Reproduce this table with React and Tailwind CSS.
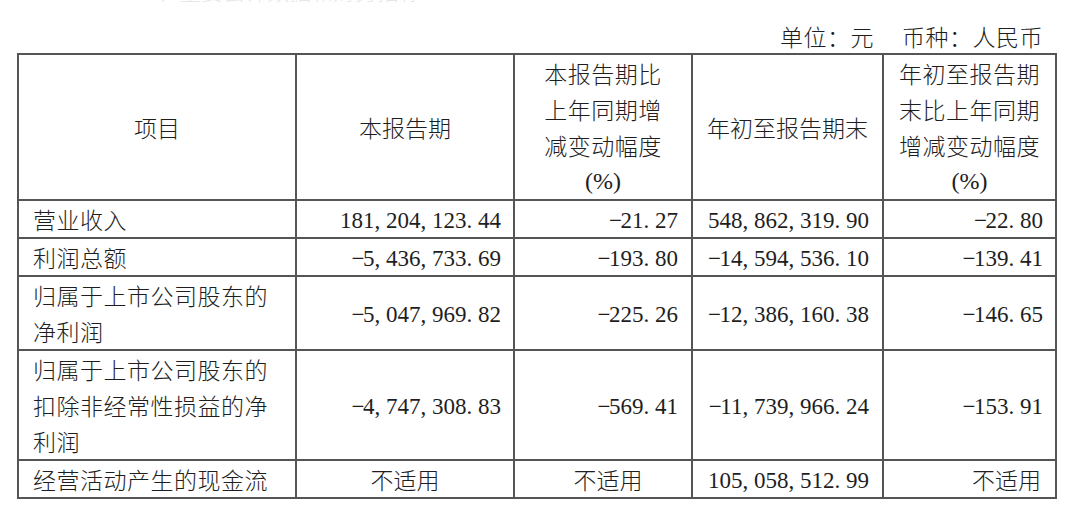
const rows = [
  { name: ["营业收入"], h: "h-[36px]", cur: "181,204,123.44", pct: "-21.27", ytd: "548,862,319.90", ytdPct: "-22.80" },
  { name: ["利润总额"], h: "h-[36px]", cur: "-5,436,733.69", pct: "-193.80", ytd: "-14,594,536.10", ytdPct: "-139.41" },
  { name: ["归属于上市公司股东的", "净利润"], h: "h-[71px]", cur: "-5,047,969.82", pct: "-225.26", ytd: "-12,386,160.38", ytdPct: "-146.65" },
  {
    name: ["归属于上市公司股东的", "扣除非经常性损益的净", "利润"],
    h: "h-[108px]",
    cur: "-4,747,308.83",
    pct: "-569.41",
    ytd: "-11,739,966.24",
    ytdPct: "-153.91",
  },
];

const cjk = "font-['Noto_Sans_CJK_SC',sans-serif] font-light";

// SimSun style numbers: digits and punctuation all half width
function Num({ v }) {
  return (
    <span className="font-['Liberation_Serif','Noto_Sans_CJK_SC',serif] text-[23px] leading-[28px]">
      {v.split("").map((c, i) =>
        /\d/.test(c) ? (
          <span key={i}>{c}</span>
        ) : (
          <span key={i} className={c === "-" ? "inline-block w-[0.5em] text-center" : "inline-block w-[0.5em] text-left"}>
            {c === "-" ? "−" : c}
          </span>
        )
      )}
    </span>
  );
}

function HeadLines({ lines }) {
  return (
    <div className="flex flex-col items-center leading-[36px]">
      {lines.map((l, i) =>
        l === "(%)" ? (
          <span key={i} className="font-['Liberation_Serif',serif] text-[24px]">(%)</span>
        ) : (
          <span key={i} className="tracking-[0.5px]">{l}</span>
        )
      )}
    </div>
  );
}

export default function App() {
  const td = "border-2 border-[#555] align-middle leading-[28px]";
  return (
    <div className={`bg-white w-[1080px] h-[506px] overflow-hidden text-[#1e1e1e] ${cjk}`}>
      {/* cut-off title above, only the bottom of the glyphs shows */}
      <div className="h-[3px] overflow-hidden pl-[135px] text-gray-200 text-[22px]">
        <div className="-mt-[21px] leading-[22px]">一、主要会计数据和财务指标</div>
      </div>
      <div className="h-[50px] pt-[16px] pr-[37px] text-right text-[23px] leading-[34px] tracking-[0.5px]">
        单位：元<span className="inline-block w-[28px]"></span>币种：人民币
      </div>
      <table className="ml-[17px] w-[1038px] table-fixed border-collapse text-[23px]">
        <colgroup>
          <col className="w-[278px]" />
          <col className="w-[218px]" />
          <col className="w-[178px]" />
          <col className="w-[191px]" />
          <col className="w-[173px]" />
        </colgroup>
        <tbody>
          <tr className="h-[145px]">
            <td className={`${td} text-center`}>项目</td>
            <td className={`${td} text-center`}>本报告期</td>
            <td className={`${td} text-center`}>
              <HeadLines lines={["本报告期比", "上年同期增", "减变动幅度", "(%)"]} />
            </td>
            <td className={`${td} text-center`}>年初至报告期末</td>
            <td className={`${td} text-center`}>
              <HeadLines lines={["年初至报告期", "末比上年同期", "增减变动幅度", "(%)"]} />
            </td>
          </tr>
          {rows.map((r) => (
            <tr key={r.cur} className={r.h}>
              <td className={`${td} pl-[14px] tracking-[0.5px]`}>
                {r.name.map((n) => (
                  <div key={n} className="leading-[36px]">{n}</div>
                ))}
              </td>
              <td className={`${td} text-right pr-[12px]`}>
                <Num v={r.cur} />
              </td>
              <td className={`${td} text-right pr-[13px]`}>
                <Num v={r.pct} />
              </td>
              <td className={`${td} text-right pr-[13px]`}>
                <Num v={r.ytd} />
              </td>
              <td className={`${td} text-right pr-[12px]`}>
                <Num v={r.ytdPct} />
              </td>
            </tr>
          ))}
          <tr className="h-[36px]">
            <td className={`${td} pl-[14px] tracking-[0.5px]`}>
              <div className="leading-[36px]">经营活动产生的现金流</div>
            </td>
            <td className={`${td} text-center`}>不适用</td>
            <td className={`${td} text-center pl-[10px]`}>不适用</td>
            <td className={`${td} text-right pr-[13px]`}>
              <Num v="105,058,512.99" />
            </td>
            <td className={`${td} text-right pr-[14px]`}>不适用</td>
          </tr>
        </tbody>
      </table>
    </div>
  );
}
